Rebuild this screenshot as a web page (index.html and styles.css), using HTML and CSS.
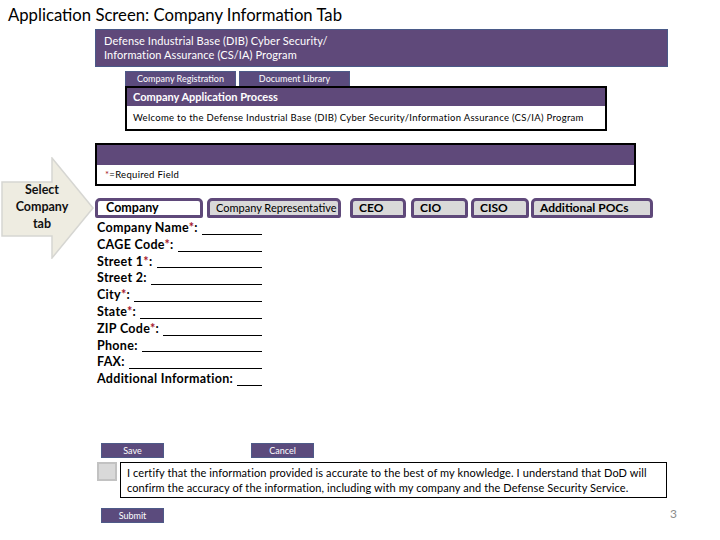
FILE: index.html
```html
<!DOCTYPE html>
<html lang="en">
<head>
<meta charset="utf-8">
<title>Application Screen: Company Information Tab</title>
<link rel="stylesheet" href="styles.css">
</head>
<body>
<div class="page">
  <h1 class="title">Application Screen: Company Information Tab</h1>

  <div class="banner">Defense Industrial Base (DIB) Cyber Security/<br>Information Assurance (CS/IA) Program</div>

  <div class="nav">
    <div class="nav-tab">Company Registration</div>
    <div class="nav-tab">Document Library</div>
  </div>

  <div class="process">
    <div class="process-head">Company Application Process</div>
    <div class="process-body">Welcome to the Defense Industrial Base (DIB) Cyber Security/Information Assurance (CS/IA) Program</div>
  </div>

  <div class="main">
    <div class="callout">
      <svg class="callout-shape" width="95" height="102" viewBox="0 0 95 102">
        <polygon points="2,25 52,25 52,1 93,51 52,101 52,79 2,79" fill="#EEECE1" stroke="#D6D6D2" stroke-width="1.5"/>
      </svg>
      <div class="callout-text">Select<br>Company<br>tab</div>
    </div>

    <div class="content">
      <div class="req">
        <div class="req-head"></div>
        <div class="req-body"><span class="star">*</span>=Required Field</div>
      </div>

      <div class="tabs">
        <div class="tab tab-active tab-company">Company</div>
        <div class="tab tab-rep">Company Representative</div>
        <div class="tab tab-ceo">CEO</div>
        <div class="tab tab-cio">CIO</div>
        <div class="tab tab-ciso">CISO</div>
        <div class="tab tab-pocs">Additional POCs</div>
      </div>

      <div class="fields">
        <div class="field"><span class="label">Company Name<span class="star">*</span>:</span><span class="blank"></span></div>
        <div class="field"><span class="label">CAGE Code<span class="star">*</span>:</span><span class="blank"></span></div>
        <div class="field"><span class="label">Street 1<span class="star">*</span>:</span><span class="blank"></span></div>
        <div class="field"><span class="label">Street 2:</span><span class="blank"></span></div>
        <div class="field"><span class="label">City<span class="star">*</span>:</span><span class="blank"></span></div>
        <div class="field"><span class="label">State<span class="star">*</span>:</span><span class="blank"></span></div>
        <div class="field"><span class="label">ZIP Code<span class="star">*</span>:</span><span class="blank"></span></div>
        <div class="field"><span class="label">Phone:</span><span class="blank"></span></div>
        <div class="field"><span class="label">FAX:</span><span class="blank"></span></div>
        <div class="field"><span class="label">Additional Information:</span><span class="blank"></span></div>
      </div>

      <div class="actions">
        <div class="btn">Save</div>
        <div class="btn btn-cancel">Cancel</div>
      </div>

      <div class="certify">
        <div class="checkbox"></div>
        <div class="certify-text">I certify that the information provided is accurate to the best of my knowledge. I understand that DoD will<br>confirm the accuracy of the information, including with my company and the Defense Security Service.</div>
      </div>

      <div class="submit-row">
        <div class="btn">Submit</div>
        <div class="pagenum">3</div>
      </div>
    </div>
  </div>
</div>
</body>
</html>
```

FILE: styles.css
```css
* { box-sizing: border-box; }

html, body {
  margin: 0;
  padding: 0;
  background: #ffffff;
}

body {
  font-family: "Lato", "Open Sans", "Liberation Sans", sans-serif;
  color: #000000;
}

.page {
  width: 720px;
  height: 540px;
  overflow: hidden;
}

.title {
  margin: 4px 0 0 8px;
  font-size: 16.7px;
  line-height: 22px;
  font-weight: 400;
}

.banner {
  margin: 3px 0 0 95px;
  width: 573px;
  height: 38px;
  padding: 4px 8px 0;
  background: #5F497A;
  border: 1px solid #4A5A88;
  color: #ffffff;
  font-size: 11px;
  line-height: 14px;
  letter-spacing: 0.1px;
}

.nav {
  display: flex;
  gap: 3px;
  margin: 4px 0 0 125px;
}

.nav-tab {
  width: 111px;
  height: 15px;
  background: #5B4B7D;
  border: 1px solid #4E5A88;
  border-bottom: none;
  color: #ffffff;
  font-size: 9px;
  line-height: 14px;
  text-align: center;
}

.process {
  margin-left: 125px;
  width: 482px;
  border: 2px solid #000000;
}

.process-head {
  height: 18px;
  background: #5F497A;
  color: #ffffff;
  font-weight: 700;
  font-size: 11px;
  line-height: 18px;
  padding-left: 6px;
}

.process-body {
  height: 23px;
  font-size: 9.5px;
  letter-spacing: 0.3px;
  line-height: 23px;
  padding-left: 6px;
  white-space: nowrap;
}

.main {
  display: flex;
  margin-top: 12px;
}

.callout {
  display: grid;
  width: 95px;
  height: 102px;
  margin-top: 14px;
  flex: none;
}

.callout-shape,
.callout-text {
  grid-area: 1 / 1;
}

.callout-text {
  width: 84px;
  padding-top: 24px;
  text-align: center;
  font-weight: 700;
  font-size: 12.5px;
  line-height: 17px;
  color: #111111;
}

.content {
  flex: 1;
  display: flex;
  flex-direction: column;
  align-items: flex-start;
}

.req {
  width: 541px;
  border: 2px solid #000000;
}

.req-head {
  height: 20px;
  background: #5F497A;
}

.req-body {
  height: 19px;
  font-size: 9.5px;
  letter-spacing: 0.3px;
  line-height: 19px;
  padding-left: 8px;
}

.star {
  color: #A6192E;
}

.tabs {
  display: flex;
  margin-top: 12px;
}

.tab {
  height: 20px;
  border: 3px solid #5F497A;
  border-radius: 5px 5px 2px 2px;
  background: #D9D9D9;
  padding-left: 6px;
  font-weight: 700;
  font-size: 12px;
  line-height: 14px;
  white-space: nowrap;
}

.tab-active {
  background: #ffffff;
}

.tab-company {
  width: 108px;
  padding-left: 8px;
  font-size: 12.5px;
}

.tab-rep {
  width: 134px;
  margin-left: 4px;
  font-weight: 400;
  font-size: 11px;
}

.tab-ceo {
  width: 56px;
  margin-left: 9px;
}

.tab-cio {
  width: 57px;
  margin-left: 5px;
}

.tab-ciso {
  width: 58px;
  margin-left: 3px;
}

.tab-pocs {
  width: 122px;
  margin-left: 2px;
}

.fields {
  width: 165px;
  margin: 2px 0 0 2px;
}

.field {
  display: flex;
  align-items: flex-end;
  height: 16.8px;
  font-weight: 700;
  font-size: 12.5px;
  letter-spacing: 0.3px;
  line-height: 16.8px;
}

.label {
  white-space: nowrap;
}

.blank {
  flex: 1;
  height: 0;
  margin: 0 0 2px 4px;
  border-bottom: 1px solid #000000;
}

.actions {
  display: flex;
  gap: 87px;
  margin: 55px 0 0 6px;
}

.btn {
  width: 63px;
  height: 15px;
  background: #5B4B7D;
  border: 1px solid #4E5A88;
  color: #ffffff;
  font-size: 9px;
  line-height: 13px;
  text-align: center;
}

.certify {
  display: flex;
  gap: 3px;
  margin: 4px 0 0 2px;
}

.checkbox {
  width: 20px;
  height: 19px;
  background: #D9D9D9;
  border: 2px solid #C2C2C2;
}

.certify-text {
  width: 547px;
  border: 1px solid #000000;
  padding: 2px 6px;
  font-size: 11px;
  letter-spacing: 0.1px;
  line-height: 15px;
  white-space: nowrap;
}

.submit-row {
  display: flex;
  align-self: stretch;
  align-items: flex-start;
  margin: 10px 0 0 6px;
}

.pagenum {
  margin-left: auto;
  margin-right: 43px;
  color: #8C8C8C;
  font-size: 12px;
  line-height: 12px;
}
```
